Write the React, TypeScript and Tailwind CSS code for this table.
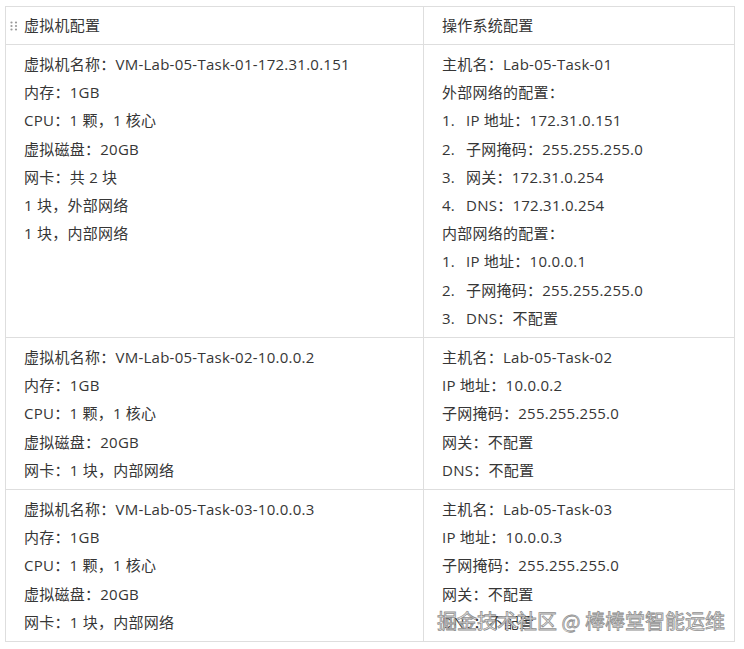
type Line = string | { n: string; t: string };

type Row = {
  vm: Line[];
  os: Line[];
};

const rows: Row[] = [
  {
    vm: [
      "虚拟机名称：VM-Lab-05-Task-01-172.31.0.151",
      "内存：1GB",
      "CPU：1 颗，1 核心",
      "虚拟磁盘：20GB",
      "网卡：共 2 块",
      "1 块，外部网络",
      "1 块，内部网络",
    ],
    os: [
      "主机名：Lab-05-Task-01",
      "外部网络的配置：",
      { n: "1.", t: "IP 地址：172.31.0.151" },
      { n: "2.", t: "子网掩码：255.255.255.0" },
      { n: "3.", t: "网关：172.31.0.254" },
      { n: "4.", t: "DNS：172.31.0.254" },
      "内部网络的配置：",
      { n: "1.", t: "IP 地址：10.0.0.1" },
      { n: "2.", t: "子网掩码：255.255.255.0" },
      { n: "3.", t: "DNS：不配置" },
    ],
  },
  {
    vm: [
      "虚拟机名称：VM-Lab-05-Task-02-10.0.0.2",
      "内存：1GB",
      "CPU：1 颗，1 核心",
      "虚拟磁盘：20GB",
      "网卡：1 块，内部网络",
    ],
    os: [
      "主机名：Lab-05-Task-02",
      "IP 地址：10.0.0.2",
      "子网掩码：255.255.255.0",
      "网关：不配置",
      "DNS：不配置",
    ],
  },
  {
    vm: [
      "虚拟机名称：VM-Lab-05-Task-03-10.0.0.3",
      "内存：1GB",
      "CPU：1 颗，1 核心",
      "虚拟磁盘：20GB",
      "网卡：1 块，内部网络",
    ],
    os: [
      "主机名：Lab-05-Task-03",
      "IP 地址：10.0.0.3",
      "子网掩码：255.255.255.0",
      "网关：不配置",
      "DNS：不配置",
    ],
  },
];

function DragHandle() {
  return (
    <svg width="8" height="10" viewBox="0 0 8 10" className="mr-[6px] shrink-0" aria-hidden>
      {[1.5, 5, 8.5].map((y) =>
        [1.5, 6].map((x) => <circle key={`${x}-${y}`} cx={x} cy={y} r="1.1" fill="#9a9a9a" />)
      )}
    </svg>
  );
}

function Cell({ lines, right }: { lines: Line[]; right?: boolean }) {
  return (
    <div className={`py-[5px] pl-[18px] ${right ? "" : "border-r border-[#dedede]"}`}>
      {lines.map((line, i) =>
        typeof line === "string" ? (
          <p key={i} className="leading-[28.2px] whitespace-pre">
            {line}
          </p>
        ) : (
          <p key={i} className="flex leading-[28.2px] whitespace-pre">
            <span className="w-[24px] shrink-0">{line.n}</span>
            <span>{line.t}</span>
          </p>
        )
      )}
    </div>
  );
}

export default function App() {
  return (
    <div className="relative min-h-[649px] w-[744px] bg-white pl-[5px] pt-[6px] text-[15px] tracking-[0.25px] text-[#363636] [font-family:'Open_Sans','Noto_Sans_CJK_SC',sans-serif]">
      <div className="w-[730px] border border-[#dedede]">
        <div className="grid h-[38px] grid-cols-[418px_310px] border-b border-[#dedede]">
          <div className="flex items-center border-r border-[#dedede] pl-[4px]">
            <DragHandle />
            <span>虚拟机配置</span>
          </div>
          <div className="flex items-center pl-[18px]">操作系统配置</div>
        </div>
        {rows.map((row, i) => (
          <div
            key={i}
            className={`grid grid-cols-[418px_310px] ${i < rows.length - 1 ? "border-b border-[#dedede]" : ""}`}
          >
            <Cell lines={row.vm} />
            <Cell lines={row.os} right />
          </div>
        ))}
      </div>
      <div className="absolute left-[437px] top-[606px] text-[20px] tracking-normal text-[#f4f4f4]/90 [-webkit-text-stroke:0.8px_#909090] [font-family:'Noto_Sans_CJK_SC',sans-serif]">
        掘金技术社区 @ 棒棒堂智能运维
      </div>
    </div>
  );
}
